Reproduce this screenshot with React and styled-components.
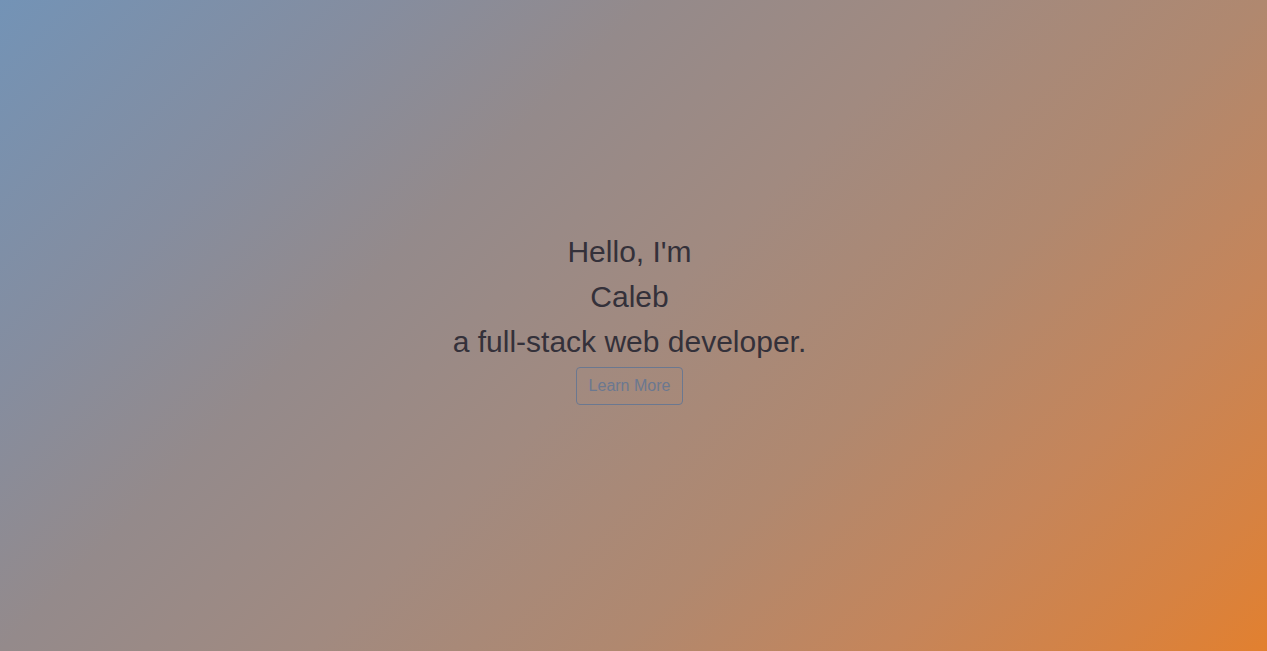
import React from "react";
import styled, { createGlobalStyle } from "styled-components";

const Global = createGlobalStyle`
  html, body { margin: 0; padding: 0; height: 100%; }
  body { font-family: "Liberation Sans", Arial, sans-serif; }
  #root { height: 100%; }
`;

const Hero = styled.main`
  box-sizing: border-box;
  width: 100%;
  height: 100vh;
  background: linear-gradient(
    135deg,
    #7393b6 0%,
    #858d9f 20%,
    #948a8b 34%,
    #a18a80 50%,
    #b0886f 66%,
    #c5855a 80%,
    #d68242 92%,
    #e2802f 100%
  );
  display: flex;
  flex-direction: column;
  align-items: center;
  justify-content: center;
  padding: 0 8px 17px 0;
`;

const Line = styled.h1`
  margin: 0;
  font-size: 30px;
  line-height: 45px;
  font-weight: 400;
  color: #34313a;
  text-align: center;
`;

const Button = styled.button`
  margin-top: 3px;
  font-family: "Liberation Sans", Arial, sans-serif;
  font-size: 16px;
  line-height: 24px;
  padding: 6px 12px;
  background: transparent;
  color: #6b7890;
  border: 1px solid #6b7890;
  border-radius: 4px;
  cursor: pointer;
`;

export default function App() {
  return (
    <>
      <Global />
      <Hero>
        <Line>Hello, I'm</Line>
        <Line>Caleb</Line>
        <Line>a full-stack web developer.</Line>
        <Button>Learn More</Button>
      </Hero>
    </>
  );
}
